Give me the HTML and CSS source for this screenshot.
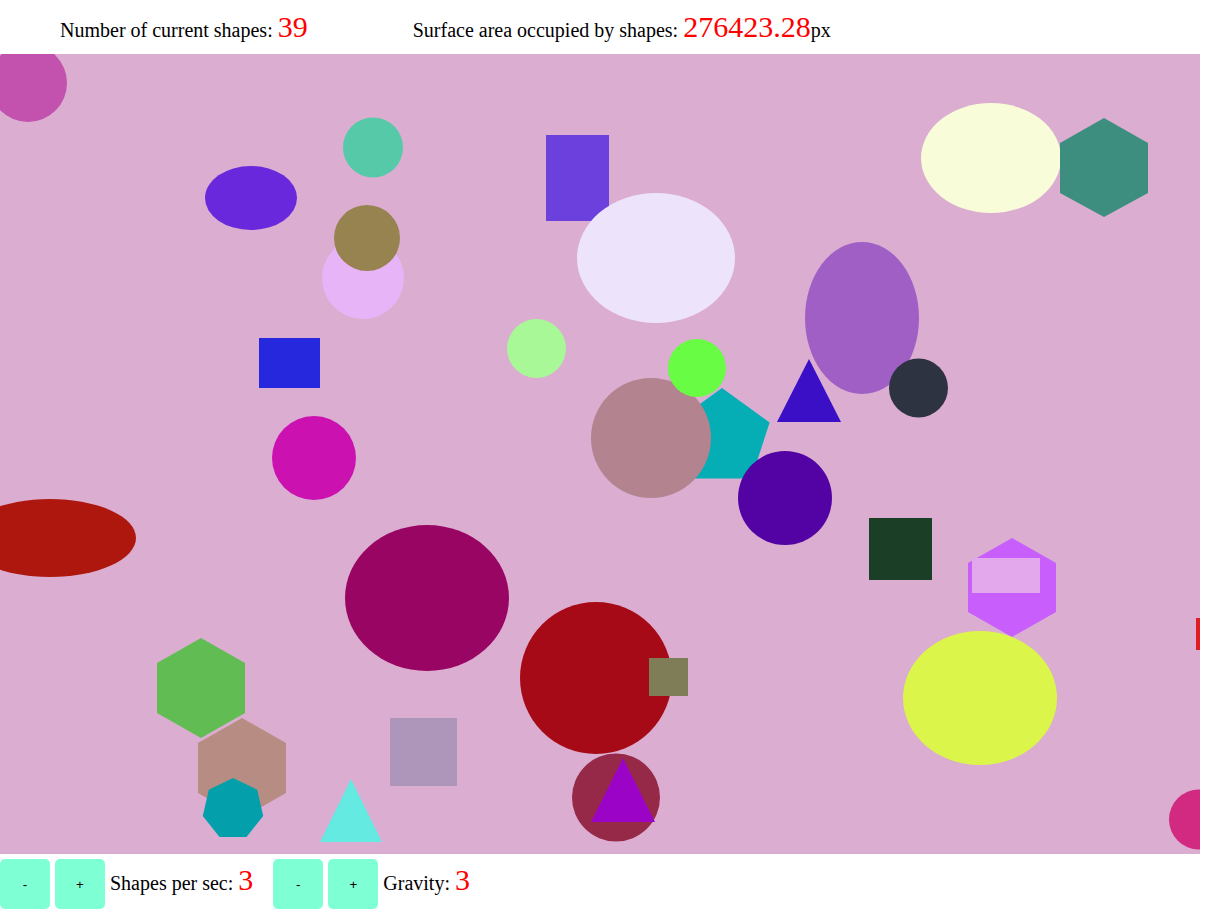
FILE: index.html
```html
<!DOCTYPE html>
<html>
<head>
<meta charset="utf-8">
<link rel="stylesheet" href="styles.css">
</head>
<body>
<div class="stats">
  <div class="stat">Number of current shapes: <span class="num">39</span></div>
  <div class="stat stat-area">Surface area occupied by shapes: <span class="num">276423.28</span>px</div>
</div>
<svg class="canvas" width="1200" height="800" viewBox="0 0 1200 800">
  <rect x="0" y="0" width="1200" height="800" fill="#daadd1"/>
  <g transform="translate(0,-54)">
    <circle cx="28" cy="83" r="39" fill="#c352ae"/>
    <circle cx="373" cy="147.5" r="30" fill="#55c9a8"/>
    <ellipse cx="251" cy="198" rx="46" ry="32" fill="#6a28dc"/>
    <rect x="546" y="135" width="63" height="86" fill="#6b40dd"/>
    <ellipse cx="656" cy="258" rx="79" ry="65" fill="#ede4fc"/>
    <ellipse cx="991" cy="158" rx="70" ry="55" fill="#f8fcd8"/>
    <polygon points="1104,118 1148,143 1148,193 1104,217 1060,193 1060,143" fill="#3e8e80"/>
    <circle cx="363" cy="278" r="41" fill="#e8b4f8"/>
    <circle cx="367" cy="238" r="33" fill="#96834f"/>
    <ellipse cx="862" cy="318" rx="57" ry="76" fill="#a05fc5"/>
    <rect x="259" y="338" width="61" height="50" fill="#2528dc"/>
    <circle cx="536.5" cy="348.5" r="29.5" fill="#a8f898"/>
    <polygon points="722,388 769.6,422.5 751.4,478.5 692.6,478.5 674.4,422.5" fill="#04aeb4"/>
    <circle cx="651" cy="438" r="60" fill="#b3838f"/>
    <circle cx="697" cy="368" r="29" fill="#68fc44"/>
    <circle cx="785" cy="498" r="47" fill="#5302a3"/>
    <polygon points="809,359 841,422 777,422" fill="#3a0fc6"/>
    <circle cx="918.5" cy="388" r="29.5" fill="#2d3340"/>
    <circle cx="314" cy="458" r="42" fill="#cb12b0"/>
    <ellipse cx="50" cy="538" rx="86" ry="39" fill="#ae170d"/>
    <ellipse cx="427" cy="598" rx="82" ry="73" fill="#990563"/>
    <rect x="869" y="518" width="63" height="62" fill="#1b3f26"/>
    <polygon points="1012,538 1056,563 1056,612 1012,637 968,612 968,563" fill="#c85ffc"/>
    <rect x="972" y="558" width="68" height="35" fill="#e3a8eb"/>
    <ellipse cx="980" cy="698" rx="77" ry="67" fill="#dcf54b"/>
    <rect x="1196" y="618" width="10" height="32" fill="#e01c24"/>
    <circle cx="1199" cy="819.5" r="30" fill="#d12a80"/>
    <circle cx="596" cy="678" r="76" fill="#a70a17"/>
    <rect x="649" y="658" width="39" height="38" fill="#7f7c58"/>
    <circle cx="616" cy="797.5" r="44" fill="#962848"/>
    <polygon points="623,758 655,822 591,822" fill="#9b04c7"/>
    <polygon points="201,638 245,663 245,713 201,738 157,713 157,663" fill="#61bd53"/>
    <polygon points="242,718 286,743 286,793 242,818 198,793 198,743" fill="#b78d83"/>
    <polygon points="233,778 257.2,789.7 263.2,815.9 246.5,836.9 219.5,836.9 202.8,815.9 208.8,789.7" fill="#03a0ac"/>
    <rect x="390" y="718" width="67" height="68" fill="#ad96b9"/>
    <polygon points="351,779 382,842 320,842" fill="#65eae1"/>
  </g>
</svg>
<div class="controls">
  <button class="btn">-</button>
  <button class="btn">+</button>
  <span class="label">Shapes per sec: <span class="num">3</span></span>
  <button class="btn btn-group">-</button>
  <button class="btn">+</button>
  <span class="label">Gravity: <span class="num">3</span></span>
</div>
</body>
</html>
```
FILE: styles.css
```css
body {
  margin: 0;
  background: #ffffff;
  font-family: "Liberation Serif", "Times New Roman", serif;
  font-size: 20px;
  color: #000;
}
.stats {
  box-sizing: border-box;
  height: 54px;
  padding: 12px 0 0 60px;
  display: flex;
  align-items: baseline;
  line-height: 30px;
  white-space: nowrap;
}
.stat-area {
  margin-left: 105px;
}
.num {
  color: #ff0000;
  font-size: 30px;
}
.canvas {
  display: block;
}
.controls {
  display: flex;
  align-items: center;
  gap: 5px;
  margin-top: 5px;
  white-space: nowrap;
}
.btn {
  width: 50px;
  height: 50px;
  border: none;
  border-radius: 5px;
  background: #7fffd4;
  font-family: "Liberation Sans", Arial, sans-serif;
  font-size: 13.33px;
  color: #000;
  padding: 0;
}
.btn-group {
  margin-left: 15px;
}
.label {
  line-height: 30px;
  padding-bottom: 5px;
}
```
